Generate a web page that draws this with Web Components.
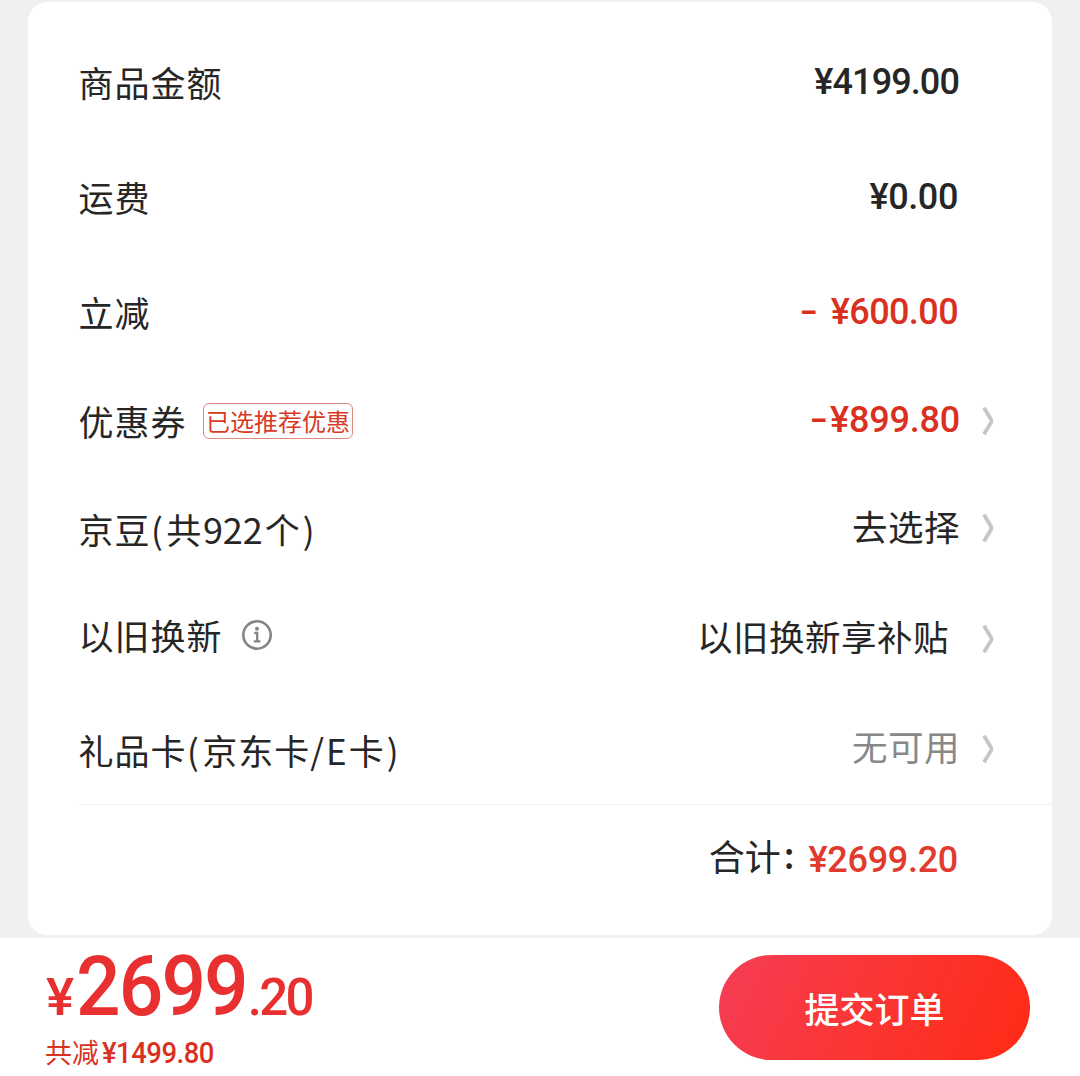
<!DOCTYPE html>
<html lang="zh-CN">
<head>
<meta charset="utf-8">
<title>提交订单</title>
<style>
html, body { margin: 0; height: 100%; }
body { background: #f0f0f0; font-family: "Noto Sans CJK SC", sans-serif; color: #262626; overflow: hidden; }
</style>
</head>
<body>
<order-page>
  <order-card>
    <order-row style="--h:106px;--end:93px" label="商品金额"><price-text style="--ls:-.9px">¥4199.00</price-text></order-row>
    <order-row style="--h:124px;--end:94px" label="运费"><price-text style="--ls:-.4px">¥0.00</price-text></order-row>
    <order-row style="--h:106px;--end:94px" label="立减"><price-text red minus style="--gap:16px;--ls:-.6px">¥600.00</price-text></order-row>
    <order-row style="--h:112px;--dy:-2px" label="优惠券" arrow><coupon-tag slot="extra">已选推荐优惠</coupon-tag><price-text red minus style="--gap:5px;--ls:-.2px">¥899.80</price-text></order-row>
    <order-row style="--h:102px;--dy:-5px;--ldy:0px" label="京豆(共922个)" arrow><span>去选择</span></order-row>
    <order-row style="--h:116px;--end:103px;--dy:-3px;--ldy:-4px;--ady:4px" label="以旧换新" arrow><info-icon slot="extra"></info-icon><span>以旧换新享补贴</span></order-row>
    <order-row style="--h:110px;--vc:#888;--dy:-8px;--ady:-2px" label="礼品卡(京东卡/E卡)" arrow><span>无可用</span></order-row>
    <order-total slot="total"><price-text red style="--red:#e03b2d;--ls:-.3px">¥2699.20</price-text></order-total>
  </order-card>
  <submit-bar></submit-bar>
</order-page>
<script>
function define(name, html) {
  const t = document.createElement('template');
  t.innerHTML = html;
  customElements.define(name, class extends HTMLElement {
    constructor() {
      super();
      this.attachShadow({ mode: 'open' }).append(t.content.cloneNode(true));
    }
    connectedCallback() {
      const label = this.shadowRoot.querySelector('.label');
      if (label) label.innerHTML = this.getAttribute('label')
        .replace(/\(/, '<span class="open">(</span>')
        .replace(/\)/, '<span class="close">)</span>')
        .replace(/(\d+)/, '<span class="num">$1</span>')
        .replace(/\/E/, '/<span class="latin">E</span>');
    }
  });
}
define('price-text', `
<style>
:host { display: flex; font: 500 36px/44px Roboto, sans-serif; letter-spacing: var(--ls, -.2px); white-space: nowrap; color: #262626; }
:host([red]) { color: var(--red, #d9301f); }
.minus { display: none; width: 15px; margin-right: var(--gap); }
.minus span { display: inline-block; transform: scaleX(1.45); transform-origin: 0 50%; }
:host([minus]) .minus { display: block; }
</style><span class="minus"><span>-</span></span><span><slot></slot></span>`);
define('coupon-tag', `
<style>
:host { display: block; box-sizing: border-box; width: 150px; height: 36px; margin-left: 16.5px; border: 1px solid #e0897c; border-radius: 6px; font-size: 24px; line-height: 34px; text-align: center; color: #d83a26; white-space: nowrap; }
</style><slot></slot>`);
define('info-icon', `
<style>
:host { display: block; margin-left: 18.5px; width: 32px; height: 32px; margin-bottom: 4px; }
svg { display: block; }
</style>
<svg width="32" height="32" viewBox="0 0 32 32" fill="none" stroke="#858585">
<circle cx="16" cy="16" r="13.7" stroke-width="2.6"/>
<circle cx="16" cy="9.8" r="2" fill="#858585" stroke="none"/>
<path d="M13.2 14h3v8.2M12.8 22.4h6.6" stroke-width="2.3"/>
</svg>`);
define('order-row', `
<style>
:host { display: flex; align-items: center; box-sizing: border-box; height: var(--h); padding-left: 50.5px; }
.label { font-size: 35px; line-height: 52px; letter-spacing: 1px; white-space: nowrap; margin-top: var(--ldy, -1px); }
.open { margin: 0 2.5px 0 .5px; }
.close { margin-left: 2px; }
.num { font-size: 36px; letter-spacing: 0; margin: 0 2px 0 .5px; }
.latin { margin: 0 1px 0 1px; }
.value { margin-left: auto; margin-right: var(--end, 92px); margin-top: var(--dy, 0px); font-size: 35.5px; letter-spacing: .5px; line-height: 52px; color: var(--vc, #262626); white-space: nowrap; }
:host([arrow]) .value { margin-right: calc(var(--end, 92px) - 70px); }
svg { display: none; margin-right: 57px; margin-top: var(--ady, 0px); }
:host([arrow]) svg { display: block; }
</style>
<div class="label"></div><slot name="extra"></slot>
<div class="value"><slot></slot></div>
<svg width="13" height="30" viewBox="0 0 13 30" fill="none" stroke="#c6c6c6" stroke-width="3.8"><path d="M2 1.8L9.2 13.8Q9.9 15 9.2 16.2L2 28.2"/></svg>`);
define('order-card', `
<style>
:host { display: flex; flex-direction: column; box-sizing: border-box; width: 1024px; height: 933px; margin: 2px auto 3px; padding-top: 27px; background: #fff; border-radius: 20px; }
.rule { height: 1px; margin: -1px 0 1px 50px; background: #f0f0f0; }
</style><slot></slot><div class="rule"></div><slot name="total"></slot>`);
define('order-total', `
<style>
:host { display: flex; align-items: center; justify-content: flex-end; height: 107px; padding-right: 94px; font-size: 36px; line-height: 52px; }
.name { margin-top: -9px; }
.colon { margin: -13px 14px 0 3px; font-weight: 500; }
</style><span class="name">合计</span><span class="colon">:</span><slot></slot>`);
define('submit-bar', `
<style>
:host { display: flex; justify-content: space-between; box-sizing: border-box; height: 138px; padding: 16px 50px 0 45px; background: #fff; color: #e93030; }
.sum { display: flex; flex-direction: column; }
.big { display: flex; align-items: baseline; font: 500 51px/60px Roboto, sans-serif; height: 80px; }
.big b { display: block; font-weight: 500; font-size: 83px; line-height: 66px; letter-spacing: -2px; transform: scaleX(.945); transform-origin: 0 50%; margin: 0 -9px 0 3px; }
.big .y { display: block; transform: scaleX(1.04); transform-origin: 0 50%; margin-left: 1px; }
.big .c { letter-spacing: -2.7px; }
.saved { display: flex; align-items: baseline; font-size: 27px; line-height: 36px; color: #d9301f; }
.saved b { display: block; font: 500 29px/34px Roboto, sans-serif; letter-spacing: -.5px; transform: scaleX(.945); transform-origin: 0 50%; margin-left: 2.5px; }
button { width: 311px; height: 105px; margin-top: 1px; border: 0; border-radius: 53px; padding: 0; background: linear-gradient(115deg, #f63c50 8%, #fb342f 55%, #ff2a15); color: #fff; font: 500 35px/103px "Noto Sans CJK SC", sans-serif; }
</style>
<div class="sum">
<div class="big"><span class="y">¥</span><b>2699</b><span class="c">.20</span></div>
<div class="saved"><span>共减</span><b>¥1499.80</b></div>
</div>
<button>提交订单</button>`);
define('order-page', `
<style>:host { display: flow-root; width: 1080px; height: 1076px; overflow: hidden; background: #f0f0f0; }</style><slot></slot>`);
</script>
</body>
</html>
